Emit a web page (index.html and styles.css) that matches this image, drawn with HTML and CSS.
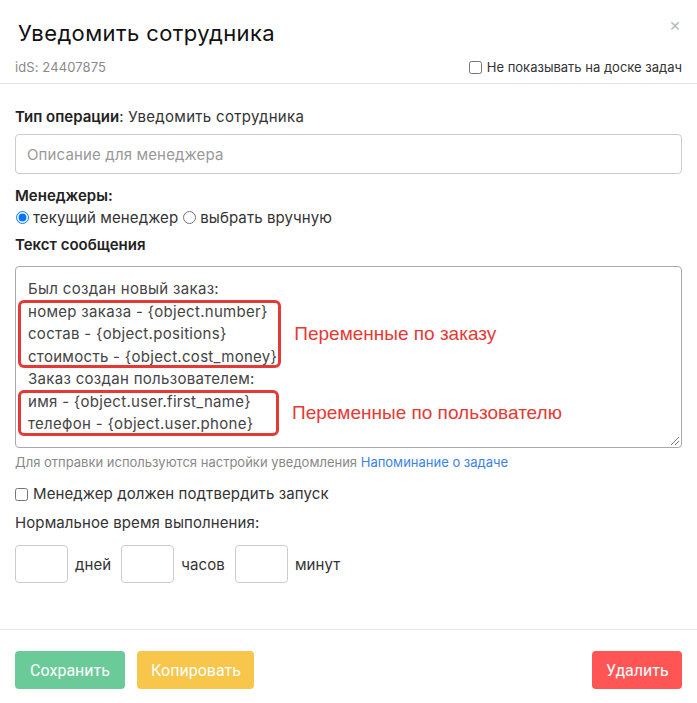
FILE: index.html
```html
<!DOCTYPE html>
<html>
<head>
    <meta name="viewport" content="width=device-width, initial-scale=1">
    <link rel="stylesheet" href="styles.css">
</head>
<body>

<div class="modal">
    <div class="modal-header">
        <div class="title-row">
            <h2>Уведомить сотрудника</h2>
            <span class="close">&times;</span>
        </div>
        <div class="meta-row">
            <span class="ids">idS: 24407875</span>
            <label class="check small"><input type="checkbox"> Не показывать на доске задач</label>
        </div>
    </div>

    <div class="modal-body">
        <div class="op-type"><b>Тип операции</b>: Уведомить сотрудника</div>
        <input type="text" class="field" placeholder="Описание для менеджера">

        <div class="group-title">Менеджеры:</div>
        <div class="radio-row">
            <label class="radio"><input type="radio" name="mgr" checked> текущий менеджер</label>
            <label class="radio"><input type="radio" name="mgr"> выбрать вручную</label>
        </div>

        <div class="group-title msg-title">Текст сообщения</div>
        <div class="message">
            <div class="line">Был создан новый заказ:</div>
            <div class="var-row">
                <div class="var-box">
                    <div class="line">номер заказа - {object.number}</div>
                    <div class="line">состав - {object.positions}</div>
                    <div class="line">стоимость - {object.cost_money}</div>
                </div>
                <div class="note">Переменные по заказу</div>
            </div>
            <div class="line">Заказ создан пользователем:</div>
            <div class="var-row">
                <div class="var-box user-box">
                    <div class="line">имя - {object.user.first_name}</div>
                    <div class="line">телефон - {object.user.phone}</div>
                </div>
                <div class="note">Переменные по пользователю</div>
            </div>
            <span class="grip"></span>
        </div>
        <div class="hint">Для отправки используются настройки уведомления <a href="#">Напоминание о задаче</a></div>

        <label class="check confirm"><input type="checkbox"> Менеджер должен подтвердить запуск</label>
        <div class="time-title">Нормальное время выполнения:</div>
        <div class="time-row">
            <input type="text" class="time-input"> <span>дней</span>
            <input type="text" class="time-input"> <span>часов</span>
            <input type="text" class="time-input"> <span>минут</span>
        </div>
    </div>

    <div class="modal-footer">
        <button class="btn btn-save">Сохранить</button>
        <button class="btn btn-copy">Копировать</button>
        <button class="btn btn-delete">Удалить</button>
    </div>
</div>

</body>
</html>
```

FILE: styles.css
```css
body {
    margin: 0;
    background: #fff;
    font-family: 'Inter', 'Noto Sans', sans-serif;
    color: #333;
    font-size: 15px;
    letter-spacing: 0.1px;
}
.modal {
    width: 697px;
}
.modal-header {
    padding: 18px 15px 6px 18px;
    border-bottom: 1px solid #e4e4e4;
}
.title-row {
    display: flex;
    justify-content: space-between;
    align-items: flex-start;
}
.title-row h2 {
    margin: 0;
    font-size: 22px;
    font-weight: 400;
    line-height: 30px;
    letter-spacing: 0.4px;
    color: #111;
}
.close {
    color: #bbb;
    font-size: 18px;
    line-height: 14px;
    margin-right: 1px;
}
.meta-row {
    display: flex;
    justify-content: space-between;
    align-items: center;
    margin-top: 9px;
    line-height: 20px;
}
.ids {
    font-size: 13px;
    color: #8a8a8a;
    margin-left: -3px;
}
.check {
    display: flex;
    align-items: center;
    gap: 5px;
}
.check input {
    margin: 0;
    width: 13px;
    height: 13px;
}
.check.small {
    font-size: 13px;
    color: #333;
    letter-spacing: 0;
}
.modal-body {
    padding: 22px 15px 46px 15px;
}
.op-type {
    line-height: 22px;
    letter-spacing: 0.3px;
}
.op-type b {
    font-weight: 600;
    color: #222;
    letter-spacing: 0;
}
.field {
    display: block;
    width: 100%;
    box-sizing: border-box;
    height: 40px;
    margin-top: 6px;
    padding: 0 11px;
    border: 1px solid #ccc;
    border-radius: 4px;
    font-family: inherit;
    font-size: 15px;
    letter-spacing: 0.15px;
}
.field::placeholder {
    color: #999;
}
.group-title {
    margin-top: 11px;
    font-weight: 600;
    color: #222;
    line-height: 22px;
    letter-spacing: 0;
}
.radio-row {
    display: flex;
    gap: 4px;
    line-height: 21px;
}
.radio {
    display: flex;
    align-items: center;
    gap: 4px;
}
.radio input {
    margin: 0 0 0 1px;
    width: 13px;
    height: 13px;
}
.msg-title {
    margin-top: 6px;
}
.message {
    position: relative;
    margin-top: 10px;
    height: 182px;
    box-sizing: border-box;
    padding: 11px 12px;
    border: 1px solid #aaa;
    border-radius: 4px;
    line-height: 22.5px;
    letter-spacing: 0.3px;
    color: #444;
}
.var-row {
    display: flex;
    align-items: center;
}
.var-box {
    position: relative;
}
.user-box {
    min-width: 247px;
}
.var-box::after {
    content: "";
    position: absolute;
    top: -1px;
    bottom: 0;
    left: -10px;
    right: -4px;
    border: 3px solid #e53935;
    border-radius: 6px;
}
.note {
    margin-left: 17px;
    font-family: 'Liberation Sans', Arial, sans-serif;
    font-size: 19px;
    letter-spacing: 0;
    color: #e53935;
}
.grip {
    position: absolute;
    right: 2px;
    bottom: 2px;
    width: 8px;
    height: 8px;
    background: linear-gradient(135deg, transparent 45%, #777 45%, #777 55%, transparent 55%, transparent 70%, #777 70%, #777 80%, transparent 80%);
}
.hint {
    margin-top: 5px;
    font-size: 13px;
    line-height: 18px;
    color: #888;
    letter-spacing: 0;
}
.hint a {
    color: #3b82e6;
    text-decoration: none;
}
.confirm {
    margin-top: 12px;
    line-height: 22px;
}
.time-title {
    margin-top: 7px;
    line-height: 22px;
}
.time-row {
    display: flex;
    align-items: center;
    margin-top: 11px;
}
.time-input {
    width: 53px;
    height: 38px;
    box-sizing: border-box;
    border: 1px solid #ccc;
    border-radius: 4px;
    margin-right: 7px;
}
.time-row span {
    margin-right: 10px;
}
.modal-footer {
    display: flex;
    gap: 12px;
    padding: 21px 15px;
    border-top: 1px solid #e4e4e4;
}
.btn {
    height: 38px;
    padding: 0 14px;
    border: none;
    border-radius: 4px;
    color: #fff;
    font-family: 'Liberation Sans Narrow', 'Roboto', sans-serif;
    font-size: 16px;
    letter-spacing: 0;
}
.btn-save {
    background: #6bcb98;
    width: 110px;
}
.btn-copy {
    background: #f7c64a;
    width: 117px;
}
.btn-delete {
    background: #ff5555;
    width: 90px;
    margin-left: auto;
}
```
